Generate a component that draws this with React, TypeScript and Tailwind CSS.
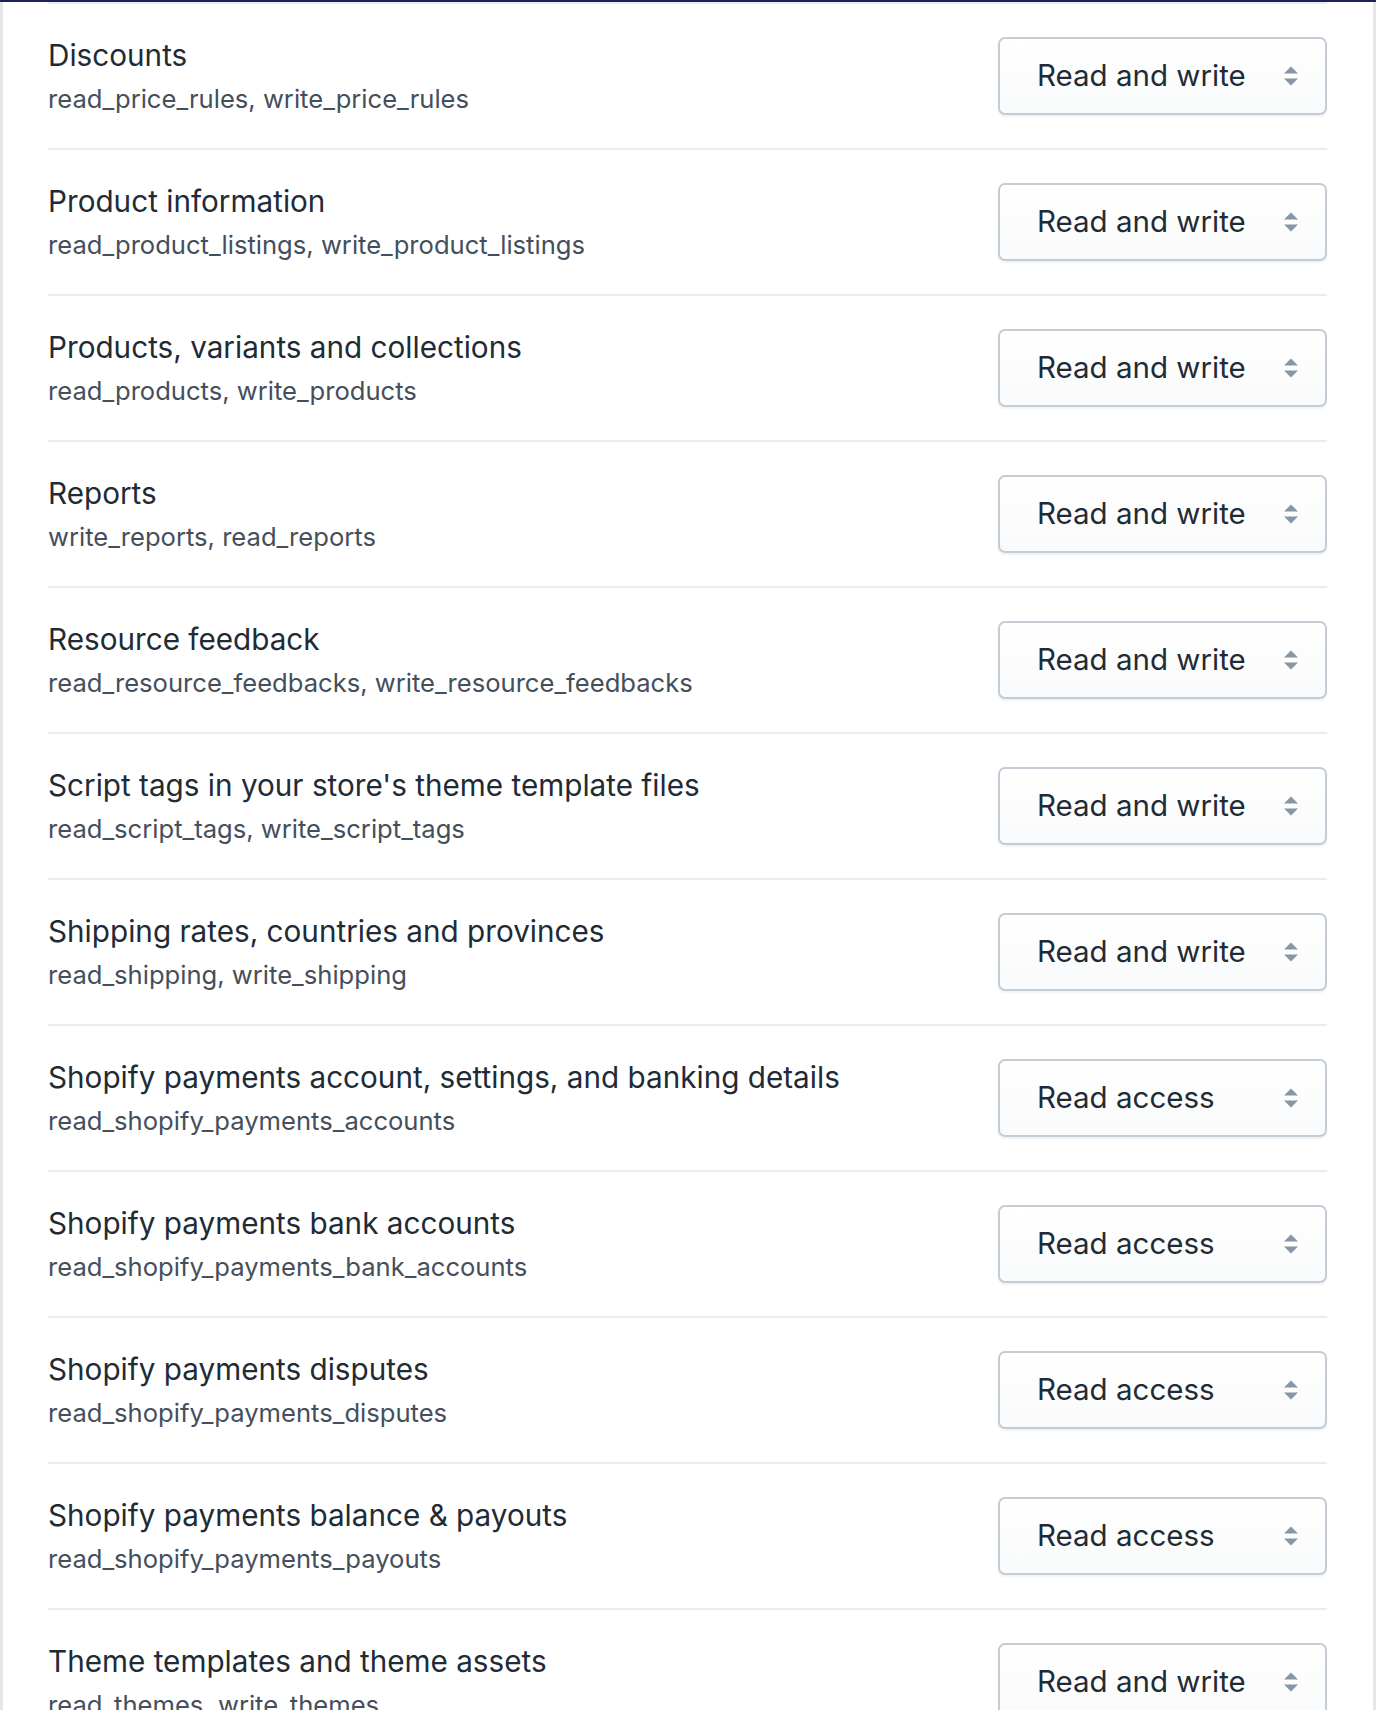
import React from 'react';

type Scope = {
  title: string;
  scopes: string;
  access: string;
};

const rows: Scope[] = [
  { title: 'Discounts', scopes: 'read_price_rules, write_price_rules', access: 'Read and write' },
  { title: 'Product information', scopes: 'read_product_listings, write_product_listings', access: 'Read and write' },
  { title: 'Products, variants and collections', scopes: 'read_products, write_products', access: 'Read and write' },
  { title: 'Reports', scopes: 'write_reports, read_reports', access: 'Read and write' },
  { title: 'Resource feedback', scopes: 'read_resource_feedbacks, write_resource_feedbacks', access: 'Read and write' },
  { title: "Script tags in your store's theme template files", scopes: 'read_script_tags, write_script_tags', access: 'Read and write' },
  { title: 'Shipping rates, countries and provinces', scopes: 'read_shipping, write_shipping', access: 'Read and write' },
  { title: 'Shopify payments account, settings, and banking details', scopes: 'read_shopify_payments_accounts', access: 'Read access' },
  { title: 'Shopify payments bank accounts', scopes: 'read_shopify_payments_bank_accounts', access: 'Read access' },
  { title: 'Shopify payments disputes', scopes: 'read_shopify_payments_disputes', access: 'Read access' },
  { title: 'Shopify payments balance & payouts', scopes: 'read_shopify_payments_payouts', access: 'Read access' },
  { title: 'Theme templates and theme assets', scopes: 'read_themes, write_themes', access: 'Read and write' },
];

function SelectArrows() {
  return (
    <svg width="14" height="20" viewBox="0 0 14 20" className="shrink-0">
      <path d="M0 7.5 L7 0.5 L14 7.5 Z" fill="#8796a5" />
      <path d="M0 12.5 L14 12.5 L7 19.5 Z" fill="#8796a5" />
    </svg>
  );
}

function AccessSelect({ value }: { value: string }) {
  return (
    <div className="w-[329px] h-[78px] shrink-0 flex items-center justify-between pl-[37px] pr-[27px] rounded-[7px] border-2 border-[#c4cdd5] bg-gradient-to-b from-white to-[#f9fafb] shadow-[0_2px_2px_rgba(22,29,37,0.06)]">
      <span className="text-[29.5px] leading-none text-[#212b36]">{value}</span>
      <SelectArrows />
    </div>
  );
}

export default function App() {
  return (
    <div className="w-[1376px] h-[1710px] overflow-hidden bg-white font-['Inter','Liberation_Sans',sans-serif]">
      {/* top nav edge */}
      <div className="h-[2px] bg-[#1e2153]" />

      <div className="h-full border-l-[3px] border-r-[3px] border-[#e4e6e9] pl-[45px] pr-[46px]">
        <div className="border-t-2 border-[#e9edf1]">
          {rows.map((row) => (
            <div
              key={row.title}
              className="h-[146px] flex items-center justify-between border-b-2 border-[#e9edf1]"
            >
              <div className="self-start pt-[31px] flex flex-col">
                <span className="text-[29.7px] leading-[40px] text-[#212b36]">{row.title}</span>
                <span className="mt-[3px] text-[25.6px] leading-[42px] text-[#454f5b]">{row.scopes}</span>
              </div>
              <AccessSelect value={row.access} />
            </div>
          ))}
        </div>
      </div>
    </div>
  );
}
